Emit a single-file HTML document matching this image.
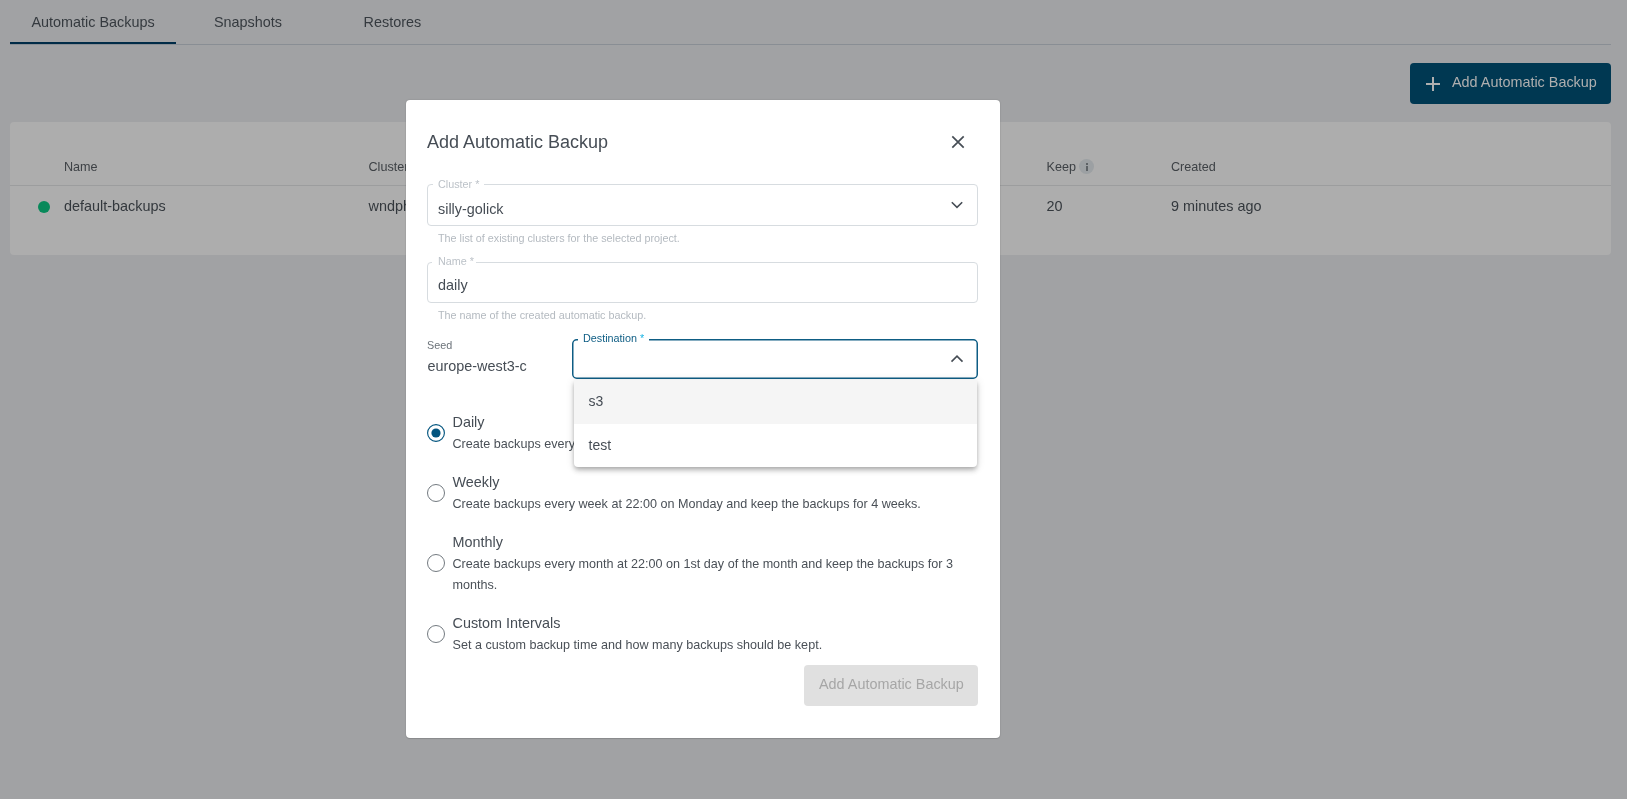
<!DOCTYPE html>
<html><head><meta charset="utf-8"><style>
html,body{margin:0;padding:0;}
body{width:1627px;height:799px;overflow:hidden;will-change:transform;background:#a1a2a4;position:relative;font-family:"Liberation Sans",sans-serif;}
.t{position:absolute;white-space:nowrap;line-height:20px;letter-spacing:0;-webkit-font-smoothing:antialiased;}
.r{position:absolute;box-sizing:content-box;}
</style></head><body>
<div class="t" style="left:31.5px;top:12px;font-size:14.4px;color:#353a3f;letter-spacing:0">Automatic Backups</div>
<div class="t" style="left:214px;top:12px;font-size:14.4px;color:#353a3f;">Snapshots</div>
<div class="t" style="left:363.6px;top:12px;font-size:14.4px;color:#353a3f;">Restores</div>
<div class="r" style="left:10px;top:44px;width:1601px;height:1px;background:#898e94"></div>
<div class="r" style="left:10px;top:42px;width:166px;height:2px;background:#002b47"></div>
<div class="r" style="left:1410px;top:63px;width:201px;height:41px;background:#003852;border-radius:4px"></div>
<svg class="r" style="left:1425px;top:76px" width="16" height="16" viewBox="0 0 16 16"><path d="M8 1V15M1 8H15" stroke="#afafaf" stroke-width="2" fill="none"/></svg>
<div class="t" style="left:1452px;top:72px;font-size:14.4px;color:#afafaf;">Add Automatic Backup</div>
<div class="r" style="left:10px;top:122px;width:1601px;height:133px;background:#adadad;border-radius:4px"></div>
<div class="r" style="left:10px;top:185px;width:1601px;height:1px;background:#9c9d9e"></div>
<div class="t" style="left:64px;top:157px;font-size:12.6px;color:#3d4145;">Name</div>
<div class="t" style="left:368.5px;top:157px;font-size:12.6px;color:#3d4145;">Cluster</div>
<div class="t" style="left:1046.5px;top:157px;font-size:12.6px;color:#3d4145;">Keep</div>
<div class="r" style="left:1079px;top:159px;width:15px;height:15px;border-radius:50%;background:#9ca0a3"></div>
<div class="r" style="left:1086px;top:163px;width:2px;height:2px;background:#5d6266"></div>
<div class="r" style="left:1086px;top:166px;width:2px;height:5px;background:#5d6266"></div>
<div class="t" style="left:1171px;top:157px;font-size:12.6px;color:#3d4145;">Created</div>
<div class="r" style="left:38px;top:201px;width:12px;height:12px;border-radius:50%;background:#08895a"></div>
<div class="t" style="left:64px;top:196px;font-size:14.4px;color:#33383d;">default-backups</div>
<div class="t" style="left:368.5px;top:196px;font-size:14.4px;color:#33383d;">wndph4mlbx</div>
<div class="t" style="left:1046.5px;top:196px;font-size:14.4px;color:#33383d;">20</div>
<div class="t" style="left:1171px;top:196px;font-size:14.4px;color:#33383d;">9 minutes ago</div>
<div class="r" style="left:406px;top:100px;width:594px;height:638px;background:#fff;border-radius:4px;box-shadow:0 0 1.5px rgba(0,0,0,.22),0 1px 1px rgba(0,0,0,.12)"></div>
<div class="t" style="left:427px;top:132px;font-size:18px;color:#464d55;letter-spacing:0">Add Automatic Backup</div>
<svg class="r" style="left:950px;top:134px" width="16" height="16" viewBox="0 0 16 16"><path d="M2.3 2.3L13.7 13.7M13.7 2.3L2.3 13.7" stroke="#464d55" stroke-width="1.7" fill="none"/></svg>
<div class="r" style="left:427px;top:184px;width:549px;height:40px;border:1px solid #d7dce0;border-radius:4px"></div>
<div class="r" style="left:433px;top:182px;width:51px;height:4px;background:#fff"></div>
<div class="t" style="left:438px;top:174px;font-size:10.8px;color:#bcc2c8;">Cluster *</div>
<div class="t" style="left:438px;top:199px;font-size:14.4px;color:#464d55;">silly-golick</div>
<svg class="r" style="left:949px;top:198px" width="16" height="14" viewBox="0 0 16 14"><path d="M2.8 4.2L8 9.3L13.2 4.2" stroke="#464d55" stroke-width="1.6" fill="none"/></svg>
<div class="t" style="left:438px;top:228px;font-size:10.8px;color:#b4bac0;">The list of existing clusters for the selected project.</div>
<div class="r" style="left:427px;top:262px;width:549px;height:39px;border:1px solid #d7dce0;border-radius:4px"></div>
<div class="r" style="left:432px;top:260px;width:44px;height:4px;background:#fff"></div>
<div class="t" style="left:438px;top:251px;font-size:10.8px;color:#bcc2c8;">Name *</div>
<div class="t" style="left:438px;top:275px;font-size:14.4px;color:#464d55;">daily</div>
<div class="t" style="left:438px;top:305px;font-size:10.8px;color:#b4bac0;">The name of the created automatic backup.</div>
<div class="t" style="left:427px;top:335px;font-size:10.8px;color:#6c737a;">Seed</div>
<div class="t" style="left:427.5px;top:356px;font-size:14.4px;color:#464d55;">europe-west3-c</div>
<svg class="r" style="left:572px;top:339px" width="406" height="40"><rect x="0.75" y="0.75" width="404.5" height="38.5" rx="4" ry="4" fill="none" stroke="#0e5d84" stroke-width="1.5"/></svg>
<div class="r" style="left:578px;top:336px;width:71px;height:6px;background:#fff"></div>
<div class="t" style="left:583px;top:328px;font-size:10.8px;color:#0e5d84;">Destination <span style="color:#1ab4e4">*</span></div>
<svg class="r" style="left:949px;top:351px" width="16" height="14" viewBox="0 0 16 14"><path d="M2.5 10.6L8 5.2L13.5 10.6" stroke="#464d55" stroke-width="1.6" fill="none"/></svg>
<svg class="r" style="left:427px;top:424px" width="18" height="18"><circle cx="9" cy="9" r="8.4" fill="none" stroke="#03557f" stroke-width="1.15"/><circle cx="9" cy="9" r="4.6" fill="#03557f"/></svg>
<div class="t" style="left:452.5px;top:412px;font-size:14.4px;color:#464d55;">Daily</div>
<div class="t" style="left:452.5px;top:434px;font-size:12.6px;color:#4a5057;">Create backups every day at 22:00 and keep the backups for 1 week.</div>
<div class="r" style="left:427px;top:484px;width:16px;height:16px;border:1px solid #737a80;border-radius:50%"></div>
<div class="t" style="left:452.5px;top:472px;font-size:14.4px;color:#464d55;">Weekly</div>
<div class="t" style="left:452.5px;top:494px;font-size:12.6px;color:#4a5057;">Create backups every week at 22:00 on Monday and keep the backups for 4 weeks.</div>
<div class="r" style="left:427px;top:554px;width:16px;height:16px;border:1px solid #737a80;border-radius:50%"></div>
<div class="t" style="left:452.5px;top:532px;font-size:14.4px;color:#464d55;">Monthly</div>
<div class="t" style="left:452.5px;top:554px;font-size:12.6px;color:#4a5057;">Create backups every month at 22:00 on 1st day of the month and keep the backups for 3</div>
<div class="t" style="left:452.5px;top:575px;font-size:12.6px;color:#4a5057;">months.</div>
<div class="r" style="left:427px;top:625px;width:16px;height:16px;border:1px solid #737a80;border-radius:50%"></div>
<div class="t" style="left:452.5px;top:613px;font-size:14.4px;color:#464d55;">Custom Intervals</div>
<div class="t" style="left:452.5px;top:635px;font-size:12.6px;color:#4a5057;">Set a custom backup time and how many backups should be kept.</div>
<div class="r" style="left:804px;top:665px;width:174px;height:41px;background:#e0e0e0;border-radius:4px"></div>
<div class="t" style="left:819px;top:674px;font-size:14.4px;color:#a6a6a6;">Add Automatic Backup</div>
<div class="r" style="left:574px;top:380px;width:403px;height:87px;background:#fff;border-radius:0 0 4px 4px;box-shadow:0 2px 4px -1px rgba(0,0,0,.2),0 4px 5px 0 rgba(0,0,0,.14),0 1px 10px 0 rgba(0,0,0,.12);overflow:hidden"><div style="position:absolute;left:0;top:0;width:403px;height:44px;background:#f5f5f5"></div></div>
<div class="t" style="left:588.5px;top:391px;font-size:14px;color:#464d55;">s3</div>
<div class="t" style="left:588.5px;top:435px;font-size:14px;color:#464d55;">test</div>
</body></html>
